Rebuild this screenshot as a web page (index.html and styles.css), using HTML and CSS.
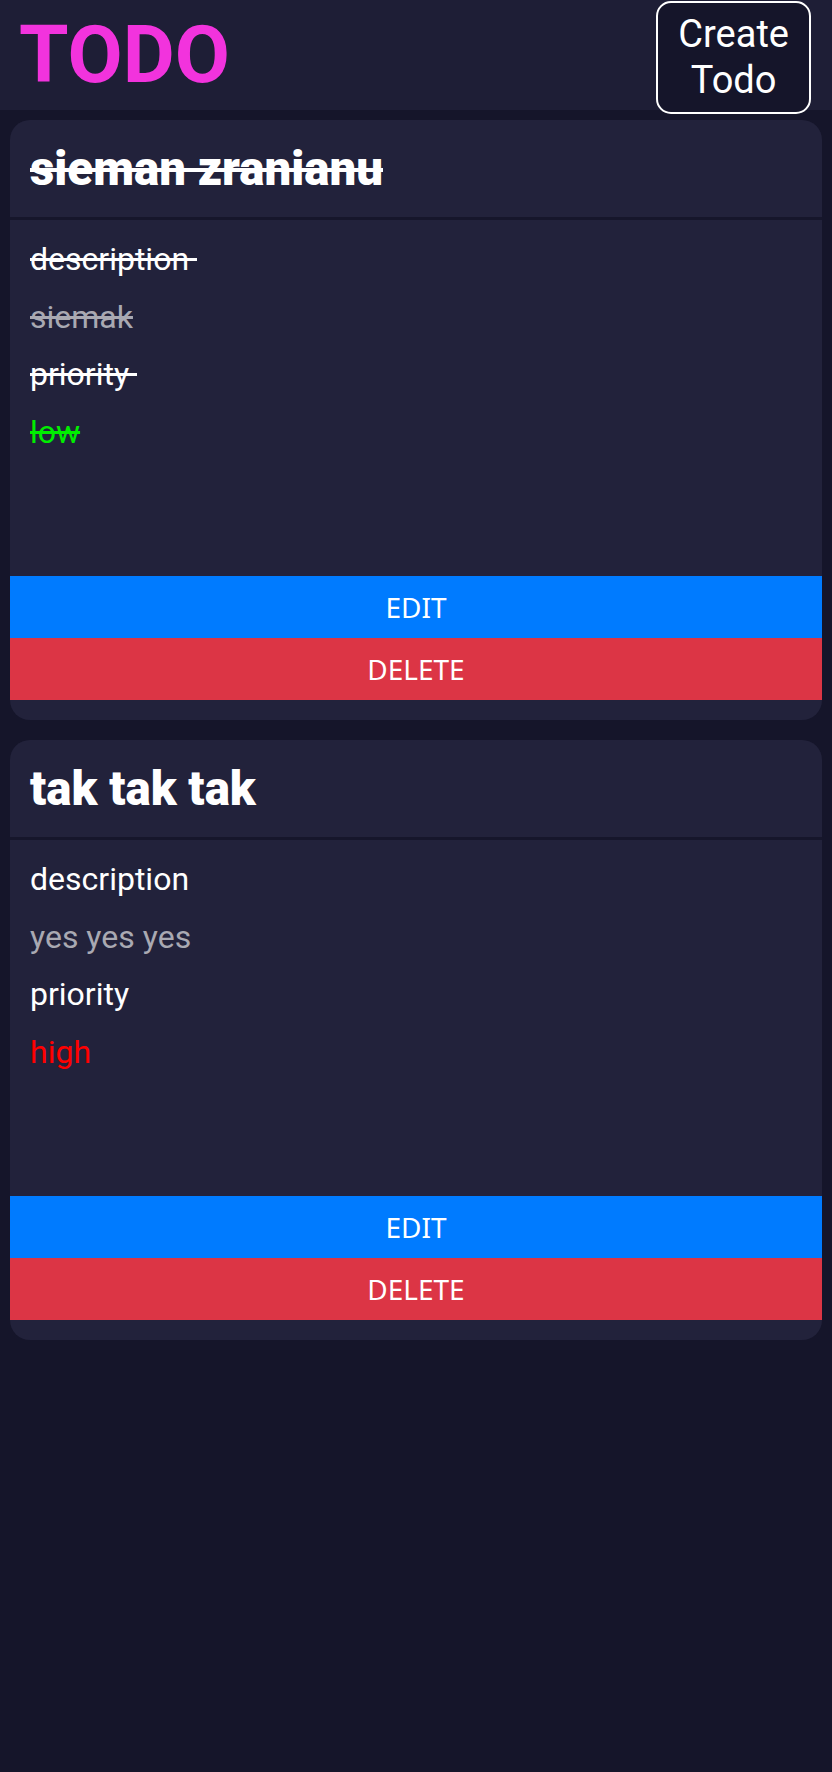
FILE: index.html
```html
<!DOCTYPE html>
<html lang="en">
<head>
<meta charset="utf-8">
<title>TODO</title>
<link rel="stylesheet" href="styles.css">
</head>
<body>
<header class="topbar">
  <h1 class="brand">TODO</h1>
  <button class="create-btn">Create<br>Todo</button>
</header>
<main class="list">
  <article class="card done">
    <div class="card-head"><h2 class="card-title">sieman zranianu</h2></div>
    <div class="card-body">
      <div class="label">description&nbsp;</div>
      <div class="value">siemak</div>
      <div class="label">priority&nbsp;</div>
      <div class="prio low">low</div>
    </div>
    <button class="btn edit">EDIT</button>
    <button class="btn delete">DELETE</button>
  </article>
  <article class="card">
    <div class="card-head"><h2 class="card-title">tak tak tak</h2></div>
    <div class="card-body">
      <div class="label">description</div>
      <div class="value">yes yes yes</div>
      <div class="label">priority</div>
      <div class="prio high">high</div>
    </div>
    <button class="btn edit">EDIT</button>
    <button class="btn delete">DELETE</button>
  </article>
</main>
</body>
</html>
```
FILE: styles.css
```css
html, body {
  margin: 0;
  padding: 0;
}
body {
  background: #15152a;
  color: #fff;
  font-family: Roboto, "Liberation Sans", sans-serif;
  min-height: 1772px;
}
.topbar {
  height: 110px;
  box-sizing: border-box;
  background: #1e1e36;
  display: flex;
  justify-content: space-between;
  align-items: center;
  padding: 0 21px 0 19px;
}
.brand {
  margin: 0;
  font-size: 80px;
  font-weight: 700;
  color: #f233dd;
  line-height: 1;
}
.create-btn {
  align-self: flex-start;
  margin-top: 1px;
  background: #15152a;
  color: #fff;
  border: 2px solid #fff;
  border-radius: 15px;
  font-family: Roboto, sans-serif;
  font-size: 38px;
  line-height: 45.6px;
  padding: 9px 20px;
  text-align: center;
}
.list {
  display: flex;
  flex-direction: column;
  gap: 20px;
  padding: 10px;
}
.card {
  height: 600px;
  box-sizing: border-box;
  background: #22223b;
  border-radius: 20px;
  display: flex;
  flex-direction: column;
  padding-bottom: 20px;
  overflow: hidden;
}
.card-head {
  padding: 21px 20px 19px;
  border-bottom: 3px solid #16162b;
}
.card-title {
  margin: 0;
  font-size: 47.4px;
  font-weight: 900;
  line-height: 57px;
}
.card-body {
  flex: 1;
  padding: 11px 20px 0;
  font-size: 32px;
  line-height: 57.5px;
}
.label { color: #fff; }
.value { color: #a9a9b2; }
.prio.low { color: #00ee00; }
.prio.high { color: #ff0000; }
.done .card-title,
.done .card-body div {
  text-decoration: line-through;
}
.btn {
  display: block;
  width: 100%;
  height: 62px;
  border: 0;
  border-radius: 0;
  color: #fff;
  font-family: "Noto Sans", sans-serif;
  font-size: 28px;
  padding: 0;
}
.btn.edit { background: #007bff; }
.btn.delete { background: #dc3545; }
```
